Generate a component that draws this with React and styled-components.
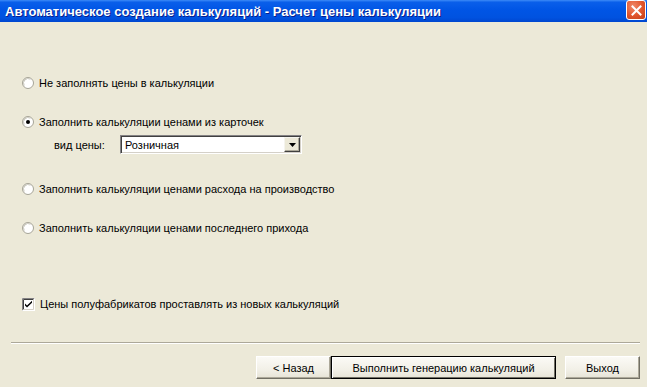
import React from "react";
import styled, { createGlobalStyle } from "styled-components";

const Global = createGlobalStyle`
  html, body { margin: 0; padding: 0; background: #ECE9D8; }
  body { font-family: "Liberation Sans", Arial, sans-serif; font-size: 11px; color: #000; }
`;

const Window = styled.div`
  width: 647px;
  height: 387px;
  display: flex;
  flex-direction: column;
  background: #ECE9D8;
  overflow: hidden;
`;

const TitleBar = styled.div`
  height: 22px;
  flex: 0 0 22px;
  display: flex;
  align-items: center;
  justify-content: space-between;
  padding: 0 1px 0 5px;
  background: linear-gradient(
    to bottom,
    #3D8BF7 0%,
    #0A5FEA 10%,
    #0055E5 45%,
    #0052E0 80%,
    #0047CF 100%
  );
`;

const Title = styled.span`
  font-family: "Liberation Sans", Arial, sans-serif;
  font-weight: bold;
  font-size: 13px;
  color: #fff;
  text-shadow: 1px 1px 0 #0A1E8C;
  white-space: nowrap;
`;

const CloseButton = styled.div`
  width: 18px;
  height: 18px;
  margin-top: -2px;
  border: 1px solid #fff;
  border-radius: 3px;
  background: radial-gradient(circle at 35% 30%, #F08A6A 0%, #E0542C 55%, #C2401A 100%);
  display: flex;
  align-items: center;
  justify-content: center;
`;

const Body = styled.div`
  flex: 1;
  display: flex;
  flex-direction: column;
`;

const Options = styled.div`
  display: flex;
  flex-direction: column;
  padding: 53px 0 0 22px;
`;

const Row = styled.label`
  display: flex;
  align-items: center;
  gap: 5px;
  height: 16px;
  margin-top: ${(p) => p.$mt || 0}px;
  white-space: nowrap;
`;

const SubRow = styled.div`
  display: flex;
  align-items: center;
  height: 19px;
  margin-top: ${(p) => p.$mt || 0}px;
  padding-left: 32px;
`;

const SubLabel = styled.span`
  width: 66px;
`;

const Select = styled.div`
  width: 182px;
  height: 19px;
  box-sizing: border-box;
  display: flex;
  align-items: center;
  background: #fff;
  border: 1px solid;
  border-color: #848284 #fff #fff #848284;
  box-shadow: inset 1px 1px 0 #404040, inset -1px -1px 0 #D4D0C8;
`;

const SelectText = styled.span`
  flex: 1;
  padding-left: 4px;
`;

const DropButton = styled.div`
  width: 16px;
  height: 15px;
  margin-right: 1px;
  box-sizing: border-box;
  background: #ECE9D8;
  border: 1px solid;
  border-color: #F5F4EE #404040 #404040 #F5F4EE;
  box-shadow: inset -1px -1px 0 #ACA899;
  display: flex;
  align-items: center;
  justify-content: center;
`;

const Footer = styled.div`
  margin-top: auto;
  display: flex;
  flex-direction: column;
  padding: 0 7px 8px 11px;
`;

const Separator = styled.div`
  height: 0;
  border-top: 1px solid #ACA899;
  border-bottom: 1px solid #fff;
`;

const ButtonRow = styled.div`
  display: flex;
  justify-content: flex-end;
  margin-top: 12px;
`;

const Button = styled.button`
  font-family: "Liberation Sans", Arial, sans-serif;
  font-size: 11px;
  color: #000;
  height: 23px;
  width: ${(p) => p.$w}px;
  margin-left: ${(p) => p.$ml || 0}px;
  box-sizing: border-box;
  padding: 0;
  background: linear-gradient(to bottom, #FBFAF6 0%, #F2F0E7 60%, #E6E3D6 100%);
  border: 1px solid;
  border-color: ${(p) => (p.$default ? "#000" : "#FFFFFF #716F64 #716F64 #FFFFFF")};
  box-shadow: ${(p) =>
    p.$default
      ? "inset 1px 1px 0 #fff, inset -1px -1px 0 #716F64"
      : "inset -1px -1px 0 #ACA899"};
  border-radius: 0;
  cursor: default;
`;

const RadioIcon = ({ checked }) => (
  <svg width="12" height="12" viewBox="0 0 12 12">
    <defs>
      <radialGradient id="rg" cx="0.6" cy="0.6" r="0.7">
        <stop offset="0" stopColor="#ffffff" />
        <stop offset="0.7" stopColor="#ffffff" />
        <stop offset="1" stopColor="#DAD8CE" />
      </radialGradient>
    </defs>
    <circle cx="6" cy="6" r="5.5" fill="url(#rg)" stroke="#A6A497" strokeWidth="1" />
    <path d="M2.2 8.5 A4.6 4.6 0 0 1 8.5 2.2" fill="none" stroke="#C9C7BC" strokeWidth="1" />
    {checked && <circle cx="6" cy="6" r="2" fill="#000" />}
  </svg>
);

const CheckIcon = () => (
  <svg width="13" height="13" viewBox="0 0 13 13">
    <rect x="0" y="0" width="13" height="13" fill="#fff" />
    <path d="M0.5 12.5 V0.5 H12.5" fill="none" stroke="#848284" />
    <path d="M1.5 11.5 V1.5 H11.5" fill="none" stroke="#404040" />
    <path d="M0.5 12.5 H12.5 V0.5" fill="none" stroke="#fff" />
    <path d="M1.5 11.5 H11.5 V1.5" fill="none" stroke="#D4D0C8" />
    <path d="M3 5.5 L5 7.5 L10 2.8 V4.8 L5 9.6 L3 7.5 Z" fill="#000" />
  </svg>
);

export default function App() {
  return (
    <>
      <Global />
      <Window>
        <TitleBar>
          <Title>Автоматическое создание калькуляций - Расчет цены калькуляции</Title>
          <CloseButton>
            <svg width="11" height="11" viewBox="0 0 11 11">
              <path d="M1.5 1.5 L9.5 9.5 M9.5 1.5 L1.5 9.5" stroke="#fff" strokeWidth="2" strokeLinecap="square" />
            </svg>
          </CloseButton>
        </TitleBar>
        <Body>
          <Options>
            <Row>
              <RadioIcon />
              <span>Не заполнять цены в калькуляции</span>
            </Row>
            <Row $mt={23}>
              <RadioIcon checked />
              <span>Заполнить калькуляции ценами из карточек</span>
            </Row>
            <SubRow $mt={5}>
              <SubLabel>вид цены:</SubLabel>
              <Select>
                <SelectText>Розничная</SelectText>
                <DropButton>
                  <svg width="7" height="4" viewBox="0 0 7 4">
                    <path d="M0 0 H7 L3.5 4 Z" fill="#000" />
                  </svg>
                </DropButton>
              </Select>
            </SubRow>
            <Row $mt={27}>
              <RadioIcon />
              <span>Заполнить калькуляции ценами расхода на производство</span>
            </Row>
            <Row $mt={23}>
              <RadioIcon />
              <span>Заполнить калькуляции ценами последнего прихода</span>
            </Row>
            <Row $mt={60}>
              <CheckIcon />
              <span>Цены полуфабрикатов проставлять из новых калькуляций</span>
            </Row>
          </Options>
          <Footer>
            <Separator />
            <ButtonRow>
              <Button $w={75}>&lt; Назад</Button>
              <Button $w={225} $default>Выполнить генерацию калькуляций</Button>
              <Button $w={75} $ml={9}>Выход</Button>
            </ButtonRow>
          </Footer>
        </Body>
      </Window>
    </>
  );
}
